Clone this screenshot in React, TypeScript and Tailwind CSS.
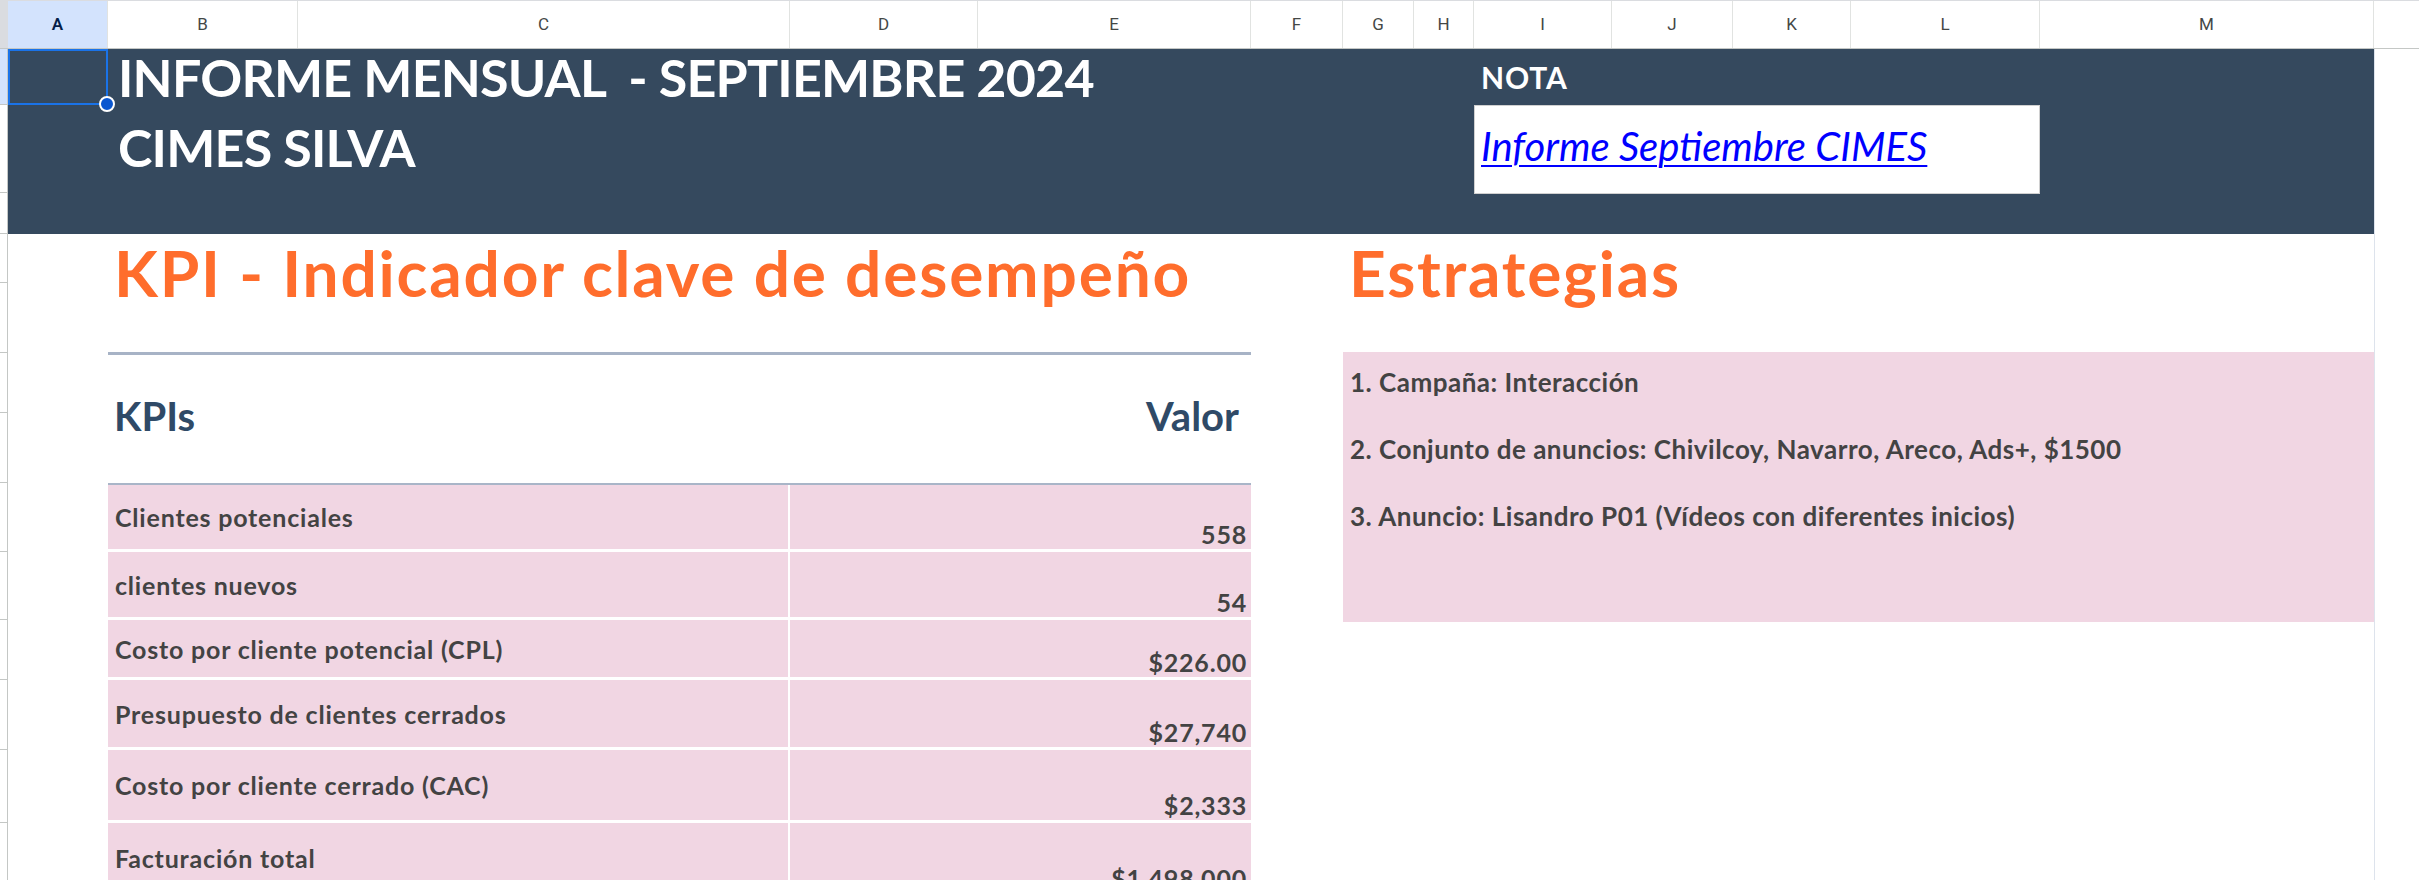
import React from 'react';

const lato = "font-['Lato','Liberation_Sans',sans-serif]";

const columns = [
  { label: 'A', cls: 'w-[100px]', active: true },
  { label: 'B', cls: 'w-[190px]' },
  { label: 'C', cls: 'w-[492px]' },
  { label: 'D', cls: 'w-[188px]' },
  { label: 'E', cls: 'w-[273px]' },
  { label: 'F', cls: 'w-[92px]' },
  { label: 'G', cls: 'w-[71px]' },
  { label: 'H', cls: 'w-[60px]' },
  { label: 'I', cls: 'w-[138px]' },
  { label: 'J', cls: 'w-[121px]' },
  { label: 'K', cls: 'w-[118px]' },
  { label: 'L', cls: 'w-[189px]' },
  { label: 'M', cls: 'w-[334px]' },
];

// row heights down the left edge (row numbers are scrolled out of view)
const rowLines = [
  'h-[56px] bg-[#d3e3fd]',
  'h-[88px]',
  'h-[41px]',
  'h-[49px]',
  'h-[70px]',
  'h-[60px]',
  'h-[70px]',
  'h-[69px]',
  'h-[68px]',
  'h-[60px]',
  'h-[70px]',
  'h-[73px]',
];

const kpis = [
  { label: 'Clientes potenciales', value: '558', h: 'h-[67px]' },
  { label: 'clientes nuevos', value: '54', h: 'h-[68px]' },
  { label: 'Costo por cliente potencial (CPL)', value: '$226.00', h: 'h-[60px]' },
  { label: 'Presupuesto de clientes cerrados', value: '$27,740', h: 'h-[70px]' },
  { label: 'Costo por cliente cerrado (CAC)', value: '$2,333', h: 'h-[73px]' },
  { label: 'Facturación total', value: '$1,498,000', h: 'h-[73px]' },
];

const strategies = [
  '1. Campaña: Interacción',
  '2. Conjunto de anuncios: Chivilcoy, Navarro, Areco, Ads+, $1500',
  '3. Anuncio: Lisandro P01 (Vídeos con diferentes inicios)',
];

function ColumnHeader() {
  return (
    <div className="flex h-[49px] border-b border-[#c4c7c5] border-t border-t-[#dadce0] font-['Roboto','Liberation_Sans',sans-serif] text-[17px]">
      <div className="w-[8px] shrink-0 bg-[#dadce0]" />
      {columns.map((c) => (
        <div
          key={c.label}
          className={`${c.cls} shrink-0 flex items-center justify-center border-r border-[#e1e3e1] ${
            c.active ? 'bg-[#d3e3fd] text-[#041e49] font-semibold' : 'bg-white text-[#444746]'
          }`}
        >
          {c.label}
        </div>
      ))}
      <div className="flex-1 bg-white" />
    </div>
  );
}

function Band() {
  return (
    <div className="flex h-[185px] bg-[#35495e]">
      {/* A1 selected */}
      <div className="relative w-[100px] shrink-0">
        <div className="absolute left-0 top-0 z-10 h-[56px] w-[100px] border-2 border-[#1a73e8]">
          <div className="absolute -bottom-[9px] -right-[9px] h-[16px] w-[16px] rounded-full border-2 border-white bg-[#0b57d0]" />
        </div>
      </div>
      {/* B-H title */}
      <div className={`w-[1366px] shrink-0 pl-[10px] font-bold text-white text-[52px] tracking-[-0.8px] ${lato}`}>
        <div className="leading-[57px] whitespace-pre">INFORME MENSUAL  - SEPTIEMBRE 2024</div>
        <div className="mt-[7px] leading-[69px]">CIMES SILVA</div>
      </div>
      {/* I-L nota */}
      <div className={`w-[566px] shrink-0 ${lato}`}>
        <div className="h-[56px] pl-[7px] text-[30px] font-bold leading-[57px] tracking-[0.8px] text-white">NOTA</div>
        <div className="flex h-[89px] items-center border border-[#d0d0d0] bg-white pb-[6px] pl-[6px]">
          <a href="#" className="text-[40px] italic leading-[47px] text-[#0000ff] underline underline-offset-[4px] decoration-[2px]">
            Informe Septiembre CIMES
          </a>
        </div>
      </div>
      <div className="w-[334px] shrink-0" />
    </div>
  );
}

function KpiSection() {
  return (
    <div className={`w-[1143px] shrink-0 bg-white ${lato}`}>
      <div className="h-[118px] pl-[6px] pt-[2px]">
        <h2 className="text-[64px] font-bold leading-[74px] tracking-[1.8px] text-[#ff6d2c]">KPI - Indicador clave de desempeño</h2>
      </div>
      <div className="h-[3px] bg-[#a7b3c6]" />
      <div className="flex h-[130px] items-center justify-between border-b-2 border-[#a9b5c8] pb-[6px] pl-[6px] pr-[12px] text-[40px] font-bold leading-[48px] text-[#2f4a67]">
        <span>KPIs</span>
        <span>Valor</span>
      </div>
      {kpis.map((k) => (
        <div
          key={k.label}
          className={`flex ${k.h} border-b-[3px] border-white bg-[#f1d6e3] text-[25px] font-bold tracking-[0.8px] text-[#434343]`}
        >
          <div className="flex w-[682px] items-center border-r-2 border-white pl-[7px] leading-[30px]">{k.label}</div>
          <div className="flex flex-1 items-end justify-end pr-[4px] leading-[30px]">{k.value}</div>
        </div>
      ))}
    </div>
  );
}

function StrategySection() {
  return (
    <div className={`w-[1031px] shrink-0 ${lato}`}>
      <div className="h-[118px] pl-[6px] pt-[2px]">
        <h2 className="text-[64px] font-bold leading-[74px] tracking-[1.8px] text-[#ff6d2c]">Estrategias</h2>
      </div>
      <div className="flex h-[270px] flex-col gap-[35px] bg-[#f1d6e3] pl-[7px] pt-[14px] text-[26px] font-bold leading-[32px] tracking-[0.5px] text-[#434343]">
        {strategies.map((s) => (
          <div key={s}>{s}</div>
        ))}
      </div>
    </div>
  );
}

export default function App() {
  return (
    <div className="h-[880px] w-[2419px] overflow-hidden bg-white">
      <ColumnHeader />
      <div className="flex">
        <div className="flex w-[8px] shrink-0 flex-col border-r border-[#c4c7c5]">
          {rowLines.map((r, i) => (
            <div key={i} className={`${r} border-b border-[#c4c7c5]`} />
          ))}
        </div>
        <div className="w-[2366px] shrink-0">
          <Band />
          <div className="flex">
            <div className="w-[100px] shrink-0" />
            <KpiSection />
            <div className="w-[92px] shrink-0" />
            <StrategySection />
          </div>
        </div>
        <div className="flex-1 border-l border-[#dde3ec]" />
      </div>
    </div>
  );
}
